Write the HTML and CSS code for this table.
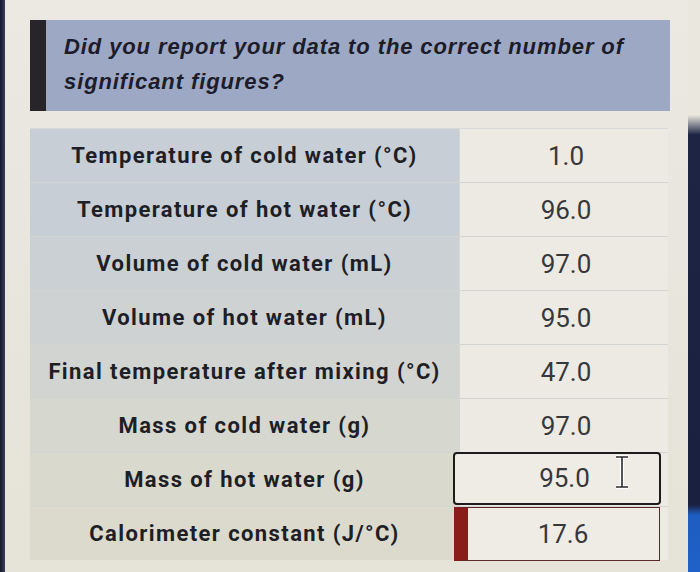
FILE: index.html
```html
<!DOCTYPE html>
<html>
<head>
<meta charset="utf-8">
<link rel="stylesheet" href="styles.css">
</head>
<body>
<div class="frame">
  <div class="bezel-left"></div>
  <main class="screen">
    <div class="prompt">
      <p>Did you report your data to the correct number of significant figures?</p>
    </div>
    <div class="table">
      <div class="row"><div class="label">Temperature of cold water (°C)</div><div class="value">1.0</div></div>
      <div class="row"><div class="label">Temperature of hot water (°C)</div><div class="value">96.0</div></div>
      <div class="row"><div class="label">Volume of cold water (mL)</div><div class="value">97.0</div></div>
      <div class="row"><div class="label">Volume of hot water (mL)</div><div class="value">95.0</div></div>
      <div class="row"><div class="label">Final temperature after mixing (°C)</div><div class="value">47.0</div></div>
      <div class="row"><div class="label">Mass of cold water (g)</div><div class="value">97.0</div></div>
      <div class="row"><div class="label">Mass of hot water (g)</div><div class="value"><div class="input focused">95.0<svg class="ibeam" width="14" height="34" viewBox="0 0 14 34"><path d="M1 2 H13 M7 2 V32 M1 32 H13" stroke="#fff" stroke-width="4" fill="none"/><path d="M1 2 H13 M7 2 V32 M1 32 H13" stroke="#2a2a2a" stroke-width="1.6" fill="none"/></svg></div></div></div>
      <div class="row last"><div class="label">Calorimeter constant (J/°C)</div><div class="value"><div class="input error">17.6</div></div></div>
    </div>
  </main>
  <div class="bezel-right"></div>
</div>
</body>
</html>
```

FILE: styles.css
```css
html, body {
  margin: 0;
  padding: 0;
}
body {
  width: 700px;
  height: 572px;
  overflow: hidden;
  background: #e7e5dc;
}
.frame {
  display: flex;
  height: 572px;
}
.bezel-left {
  width: 5px;
  background: linear-gradient(to right, #15172c, #3a3e58);
}
.bezel-right {
  width: 12px;
  background: linear-gradient(to bottom, #e9e7de 0, #e9e7de 115px, #1d2444 135px, #1a2140 505px, #1e5cc0 515px, #1f61c8 572px);
}
.screen {
  flex: 1;
  padding: 20px 0 0 25px;
  background: linear-gradient(to bottom, #ebe9e2 0, #e7e5dc 300px, #e6e4d8 572px);
}
.prompt {
  width: 640px;
  height: 91px;
  border-left: 16px solid #28252a;
  background: #9da8c5;
  box-sizing: border-box;
  padding: 9px 30px 0 18px;
}
.prompt p {
  margin: 0;
  font-family: "Liberation Sans", Arial, sans-serif;
  font-weight: bold;
  font-style: italic;
  font-size: 22px;
  letter-spacing: 0.9px;
  line-height: 35px;
  color: #1c1c2a;
}
.table {
  margin-top: 17px;
  width: 638px;
  display: flex;
  flex-direction: column;
  border-top: 1px solid #d6d8da;
}
.row {
  display: grid;
  grid-template-columns: 429px 209px;
  grid-template-rows: 53px;
  height: 54px;
  border-bottom: 1px solid #d3d5d3;
  box-sizing: border-box;
}
.row.last {
  border-bottom: none;
}
.label {
  display: flex;
  align-items: center;
  justify-content: center;
  font-family: Roboto, "Liberation Sans", sans-serif;
  font-weight: bold;
  font-size: 22px;
  letter-spacing: 1.4px;
  color: #1e1f26;
  background: #c7ced6;
}
.row:nth-child(2) .label { background: #c8ced5; }
.row:nth-child(3) .label { background: #cad0d4; }
.row:nth-child(4) .label { background: #ced2d3; }
.row:nth-child(5) .label { background: #d2d4d1; }
.row:nth-child(6) .label { background: #d6d7cf; }
.row:nth-child(7) .label { background: #d9d9ce; }
.row:nth-child(8) .label { background: #dbdacd; }
.value {
  display: flex;
  align-items: center;
  justify-content: center;
  font-family: Roboto, "Liberation Sans", sans-serif;
  font-size: 26px;
  color: #36383c;
  background: #eceae2;
  border-left: 1px solid #d6d7d4;
  padding-left: 4px;
}
.input {
  position: relative;
  flex: none;
  margin-left: -19px;
  width: 208px;
  height: 52px;
  box-sizing: border-box;
  display: flex;
  align-items: center;
  justify-content: center;
  background: #eeece4;
}
.input.focused {
  border: 2px solid #1c1c1c;
  border-radius: 4px;
  margin-top: -3px;
  height: 53px;
  padding-left: 16px;
}
.input.error {
  width: 206px;
  height: 54px;
  margin-top: 0;
  border: 1px solid #5b2a28;
  border-left: 14px solid #8a1d1a;
}
.ibeam {
  position: absolute;
  left: 160px;
  top: 1px;
}
```
